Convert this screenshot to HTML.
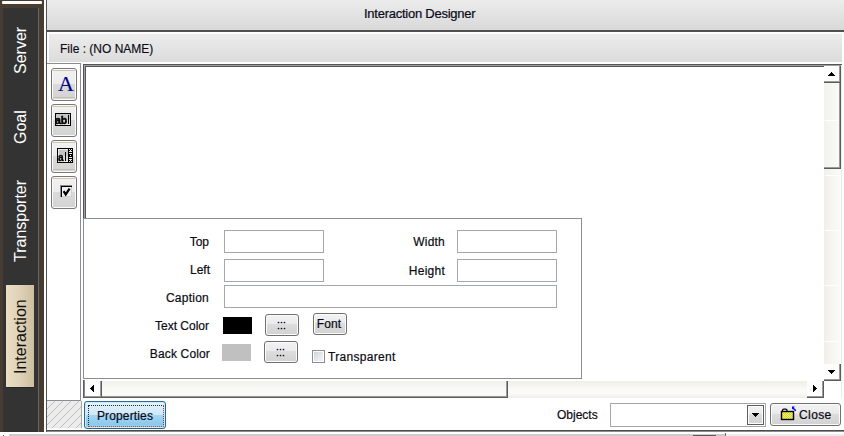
<!DOCTYPE html>
<html><head><meta charset="utf-8">
<style>
*{margin:0;padding:0;box-sizing:border-box}
html,body{width:844px;height:436px;overflow:hidden;background:#fff}
body{position:relative;font-family:"Liberation Sans",sans-serif;font-size:12px;color:#111}
.a{position:absolute}
.lbl{font-size:12px;line-height:14px;white-space:nowrap;color:#0a0a14;-webkit-text-stroke:0.2px #0a0a14}
.inp{border:1px solid #a4a6b2;background:#fff}
.btn{border:1px solid #707070;border-radius:3px;box-shadow:inset 0 0 0 1px #fbfbfb;background:linear-gradient(#f2f2f2,#ebebeb 45%,#dddddd 46%,#d2d2d2)}
.tb{width:26px;height:33px;border:1px solid #777;border-radius:3px;box-shadow:inset 0 0 0 1px #fafafa;background:linear-gradient(#f2f2f2,#ececec 48%,#dadada 50%,#d3d3d3)}
.tb i{position:absolute;left:1px;right:1px;top:1px;height:1px;background:#cfc6ae}
.tb b{position:absolute;left:1px;right:1px;bottom:2px;height:1px;background:#c6bea8}
.rot{position:absolute;white-space:nowrap;transform-origin:0 0;transform:rotate(-90deg);font-size:16px;line-height:16px}
</style></head><body>
<!-- bottom strip -->
<div class="a" style="left:9px;top:434px;width:716px;height:2px;background:#cbcbcb"></div>
<div class="a" style="left:726px;top:434px;width:118px;height:2px;background:#ececec"></div>
<div class="a" style="left:725px;top:433px;width:1px;height:3px;background:#707070"></div>
<div class="a" style="left:693px;top:435px;width:23px;height:1px;background:#5a5a5a"></div>
<div class="a" style="left:3px;top:435px;width:1px;height:1px;background:#555"></div>

<!-- left sidebar -->
<div class="a" style="left:0;top:0;width:44px;height:432px;background:#483c30"></div>
<div class="a" style="left:2px;top:1px;width:40px;height:3px;background:#fafafa;border-radius:1px"></div>
<div class="a" style="left:3px;top:8px;width:35px;height:424px;background:#333"></div>
<div class="a" style="left:38px;top:8px;width:1px;height:424px;background:#666"></div>
<div class="a" style="left:6px;top:285px;width:28px;height:102px;box-shadow:0 1px 0 #262626;background:linear-gradient(90deg,#eadec4,#ddd0b4 55%,#cdbd9f)"></div>
<div class="rot" style="left:13px;top:74px;color:#fff">Server</div>
<div class="rot" style="left:13px;top:144px;color:#fff">Goal</div>
<div class="rot" style="left:13px;top:262px;color:#fff">Transporter</div>
<div class="rot" style="left:13px;top:374px;color:#111">Interaction</div>
<div class="a" style="left:44px;top:0;width:2px;height:432px;background:#fff"></div>
<div class="a" style="left:46px;top:0;width:1px;height:432px;background:#555"></div>

<!-- title -->
<div class="a" style="left:47px;top:0;width:797px;height:30px;background:linear-gradient(#ececec,#d9d9d9)"></div>
<div class="a" style="left:47px;top:30px;width:797px;height:2px;background:#505050"></div>
<div class="a" style="left:364px;top:7px;line-height:14px;font-size:13px;letter-spacing:-0.25px;white-space:nowrap;color:#0a0a20;-webkit-text-stroke:0.2px #0a0a20">Interaction Designer</div>

<!-- file bar -->
<div class="a" style="left:49px;top:34px;width:793px;height:28px;background:linear-gradient(#ececec,#dcdcdc)"></div>
<div class="a" style="left:60px;top:42px;font-size:12px;line-height:14px;white-space:nowrap;color:#0a0a14;-webkit-text-stroke:0.15px #0a0a14">File : (NO NAME)</div>

<!-- toolbar panel -->
<div class="a" style="left:47px;top:63px;width:34px;height:338px;border:1px solid #8a8c98;border-left:none"></div>
<div class="a" style="left:47px;top:401px;width:33px;height:28px;background:#eee"></div>

<!-- canvas -->
<div class="a" style="left:83px;top:64px;width:759px;height:334px;background:#555"></div>
<div class="a" style="left:84px;top:65px;width:758px;height:333px;background:#a0a0a0"></div>
<div class="a" style="left:85px;top:66px;width:757px;height:332px;background:#555"></div>
<div class="a" style="left:86px;top:67px;width:738px;height:313px;background:#fff"></div>
<div class="a" style="left:841px;top:65px;width:1px;height:333px;background:#e6e6e6"></div>

<!-- vertical scrollbar -->
<div class="a" style="left:824px;top:66px;width:17px;height:315px;background:linear-gradient(90deg,#f0efe9,#f7f6f2 50%,#fbfbf9)"></div>
<div class="a" style="left:824px;top:66px;width:17px;height:17px;background:#fdfdfd;box-shadow:inset -1px -1px 0 #5c5c5c,inset -2px -2px 0 #9a9a9a"></div>
<div class="a" style="left:824px;top:83px;width:17px;height:86px;background:linear-gradient(90deg,#f3f2ed,#fafaf8);box-shadow:inset -1px -1px 0 #5c5c5c,inset -2px -2px 0 #9a9a9a"></div>
<div class="a" style="left:825px;top:120px;width:13px;height:1px;background:#fff"></div>
<div class="a" style="left:825px;top:175px;width:14px;height:1px;background:#fff"></div><div class="a" style="left:825px;top:230px;width:14px;height:1px;background:#fff"></div><div class="a" style="left:825px;top:285px;width:14px;height:1px;background:#fff"></div><div class="a" style="left:825px;top:341px;width:14px;height:1px;background:#fff"></div>
<div class="a" style="left:824px;top:364px;width:17px;height:17px;background:#fdfdfd;box-shadow:inset -1px -1px 0 #5c5c5c,inset -2px -2px 0 #9a9a9a"></div>
<div class="a" style="left:841px;top:65px;width:1px;height:333px;background:#ececec"></div>

<!-- horizontal scrollbar -->
<div class="a" style="left:83px;top:379px;width:741px;height:2px;background:#fff"></div>
<div class="a" style="left:85px;top:381px;width:722px;height:17px;background:linear-gradient(#efeee8,#f8f8f4 40%,#fbfbf9 70%,#efeee8)"></div>
<div class="a" style="left:83px;top:380px;width:1px;height:18px;background:#5c5c5c"></div>
<div class="a" style="left:84px;top:380px;width:1px;height:18px;background:#8a8a8a"></div>
<div class="a" style="left:85px;top:381px;width:17px;height:17px;background:#fdfdfd;box-shadow:inset -1px -1px 0 #5c5c5c,inset -2px -2px 0 #9a9a9a"></div>
<div class="a" style="left:102px;top:381px;width:406px;height:17px;background:linear-gradient(#f1f0eb,#f9f9f6 45%,#fbfbf9 75%,#f0efea);box-shadow:inset -1px -1px 0 #5c5c5c,inset -2px -2px 0 #9a9a9a"></div>
<div class="a" style="left:83px;top:397px;width:19px;height:1px;background:#5c5c5c"></div>
<div class="a" style="left:807px;top:381px;width:17px;height:17px;background:#fdfdfd;box-shadow:inset -1px -1px 0 #5c5c5c,inset -2px -2px 0 #9a9a9a"></div>
<div class="a" style="left:824px;top:381px;width:17px;height:17px;background:#fff"></div>

<!-- properties panel -->
<div class="a" style="left:83px;top:218px;width:499px;height:161px;background:#fff;border:1px solid #8a8c98"></div>
<div class="a lbl" style="left:150px;top:235px;width:59px;text-align:right">Top</div>
<div class="a lbl" style="left:150px;top:263px;width:60px;text-align:right">Left</div>
<div class="a lbl" style="left:140px;top:291px;width:69px;text-align:right;letter-spacing:0.25px">Caption</div>
<div class="a lbl" style="left:120px;top:319px;width:89px;text-align:right">Text Color</div>
<div class="a lbl" style="left:120px;top:347px;width:90px;text-align:right;letter-spacing:0.15px">Back Color</div>
<div class="a lbl" style="left:380px;top:235px;width:65px;text-align:right;letter-spacing:0.2px">Width</div>
<div class="a lbl" style="left:380px;top:264px;width:65px;text-align:right;letter-spacing:0.25px">Height</div>
<div class="a inp" style="left:224px;top:230px;width:100px;height:23px"></div>
<div class="a inp" style="left:224px;top:259px;width:100px;height:23px"></div>
<div class="a inp" style="left:224px;top:285px;width:333px;height:23px"></div>
<div class="a inp" style="left:457px;top:230px;width:100px;height:23px"></div>
<div class="a inp" style="left:457px;top:259px;width:100px;height:23px"></div>
<div class="a" style="left:223px;top:317px;width:29px;height:17px;background:#000"></div>
<div class="a" style="left:222px;top:344px;width:29px;height:17px;background:#c0c0c0"></div>
<div class="a btn" style="left:265px;top:314px;width:34px;height:22px"></div>
<div class="a btn" style="left:264px;top:341px;width:34px;height:22px"></div>
<div class="a btn" style="left:313px;top:313px;width:34px;height:22px"></div>
<div class="a lbl" style="left:312px;top:317px;width:34px;text-align:center;letter-spacing:0.15px">Font</div>
<div class="a" style="left:312px;top:350px;width:13px;height:13px;border:1px solid #8e8e8e;box-shadow:inset 0 0 0 1px #fff;background:linear-gradient(135deg,#c9ccd5,#e8e9ec 55%,#f8f8f8)"></div>
<div class="a lbl" style="left:328px;top:350px;letter-spacing:0.3px">Transparent</div>

<!-- toolbar buttons -->
<div class="a tb" style="left:51px;top:68px"><i></i><b></b></div>
<div class="a" style="left:51px;top:68px;width:26px;height:33px;text-align:center;font-family:'Liberation Serif',serif;font-size:22px;line-height:31px;padding-left:4px;-webkit-text-stroke:0.15px #000080;color:#000080">A</div>
<div class="a tb" style="left:51px;top:104px"><i></i></div>
<div class="a tb" style="left:51px;top:140px"><i></i><b></b></div>
<div class="a tb" style="left:51px;top:176px"><i></i></div>
<svg class="a" style="left:51px;top:104px" width="26" height="108" viewBox="0 0 26 108" shape-rendering="crispEdges">
 <rect x="4" y="9" width="16" height="13" fill="#000"/>
 <rect x="5" y="10" width="14" height="11" fill="#ececec"/>
 <rect x="5" y="10" width="14" height="6" fill="#c6c6c6"/>
 <rect x="5" y="16" width="14" height="4" fill="#dadada"/>
 <rect x="17" y="11" width="1" height="9" fill="#000"/>
 <rect x="6" y="44" width="16" height="15" fill="#000"/>
 <rect x="7" y="45" width="10" height="13" fill="#ececec"/>
 <rect x="8" y="46" width="9" height="6" fill="#c4c4c4"/>
 <rect x="8" y="52" width="9" height="5" fill="#dadada"/>
 <rect x="18" y="45" width="3" height="13" fill="#ececec"/>
 <rect x="14" y="48" width="1" height="9" fill="#000"/>
 <rect x="19" y="45" width="1" height="1" fill="#000"/>
 <rect x="18" y="46" width="1" height="1" fill="#000"/><rect x="20" y="46" width="1" height="1" fill="#000"/>
 <rect x="18" y="48" width="3" height="1" fill="#000"/>
 <rect x="18" y="50" width="3" height="3" fill="#000"/>
 <rect x="19" y="51" width="1" height="1" fill="#fff"/>
 <rect x="18" y="54" width="3" height="1" fill="#000"/>
 <rect x="18" y="56" width="1" height="1" fill="#000"/><rect x="20" y="56" width="1" height="1" fill="#000"/>
 <rect x="19" y="57" width="1" height="1" fill="#000"/>
 <rect x="9" y="81" width="12" height="12" fill="#d0d0d0"/>
 <rect x="9" y="81" width="12" height="1" fill="#8a8a8a"/>
 <rect x="9" y="81" width="1" height="12" fill="#8a8a8a"/>
 <rect x="10" y="82" width="11" height="1" fill="#000"/>
 <rect x="10" y="82" width="1" height="11" fill="#000"/>
 <rect x="11" y="83" width="9" height="9" fill="#f0f0f0"/>
 <path d="M12.6 87.2 L14.7 90.4 L18.6 84.6" stroke="#000" stroke-width="2.2" fill="none" stroke-linejoin="miter" shape-rendering="geometricPrecision"/>
</svg>
<div class="a" style="left:55px;top:115px;font-weight:bold;font-size:10.5px;line-height:11px;letter-spacing:-0.1px;color:#000;-webkit-text-stroke:0.5px #000;will-change:transform">ab</div>
<div class="a" style="left:58px;top:153px;font-weight:bold;font-size:10px;line-height:10px;color:#000;-webkit-text-stroke:0.4px #000;will-change:transform">a</div>

<!-- hatched -->
<svg class="a" style="left:47px;top:401px" width="35" height="28">
 <rect width="35" height="28" fill="#ececec"/>
 <g stroke="#b4b4b4" stroke-width="0.8"><line x1="-28" y1="28" x2="0" y2="0"/><line x1="-20" y1="28" x2="8" y2="0"/><line x1="-12" y1="28" x2="16" y2="0"/><line x1="-4" y1="28" x2="24" y2="0"/><line x1="4" y1="28" x2="32" y2="0"/><line x1="12" y1="28" x2="40" y2="0"/><line x1="20" y1="28" x2="48" y2="0"/><line x1="28" y1="28" x2="56" y2="0"/><line x1="36" y1="28" x2="64" y2="0"/></g>
 <rect x="34" y="0" width="1" height="28" fill="#a8a8a8"/>
 <rect x="0" y="27" width="35" height="1" fill="#fff"/>
</svg>

<!-- bottom bar -->
<div class="a" style="left:84px;top:401px;width:82px;height:28px;border:1px solid #2a6595;border-radius:3px;box-shadow:inset 0 0 0 1px #d0ecfa;background:linear-gradient(#e2f2fb,#d0e9f8 48%,#a4d6f2 50%,#8ccaee 85%,#9ed3f1)"></div>
<div class="a" style="left:88px;top:405px;width:76px;height:22px;border:1px dotted #2a2a2a;border-bottom-color:#b8542a;border-right-color:#7a4a3a"></div>
<div class="a lbl" style="left:84px;top:409px;width:82px;text-align:center;letter-spacing:0.15px">Properties</div>
<div class="a lbl" style="left:557px;top:408px">Objects</div>
<div class="a" style="left:610px;top:403px;width:156px;height:24px;border:1px solid #a4a6b0;background:#fff"></div>
<div class="a" style="left:747px;top:405px;width:17px;height:20px;border:1px solid #5e5e5e;box-shadow:inset 0 0 0 1px #fdfdfd;background:linear-gradient(#f2f2f2,#ececec 45%,#dcdcdc 47%,#d2d2d2)"></div>
<div class="a btn" style="left:770px;top:403px;width:71px;height:23px"></div>
<div class="a lbl" style="left:799px;top:408px;letter-spacing:0.4px">Close</div>
<div class="a" style="left:47px;top:430px;width:797px;height:1px;background:#4c4c4c"></div><div class="a" style="left:47px;top:431px;width:797px;height:1px;background:#8c8c8c"></div>
<svg class="a" style="left:0;top:0;z-index:5" width="844" height="436" shape-rendering="crispEdges" fill="#000"><rect x="831" y="72" width="1" height="1"/><rect x="830" y="73" width="3" height="1"/><rect x="829" y="74" width="5" height="1"/><rect x="828" y="75" width="7" height="1"/><rect x="828" y="370" width="7" height="1"/><rect x="829" y="371" width="5" height="1"/><rect x="830" y="372" width="3" height="1"/><rect x="831" y="373" width="1" height="1"/><rect x="90" y="388" width="1" height="1"/><rect x="91" y="387" width="1" height="3"/><rect x="92" y="386" width="1" height="5"/><rect x="93" y="385" width="1" height="7"/><rect x="813" y="385" width="1" height="7"/><rect x="814" y="386" width="1" height="5"/><rect x="815" y="387" width="1" height="3"/><rect x="816" y="388" width="1" height="1"/><rect x="752" y="413" width="7" height="1"/><rect x="753" y="414" width="5" height="1"/><rect x="754" y="415" width="3" height="1"/><rect x="755" y="416" width="1" height="1"/></svg>

<svg class="a" style="left:778px;top:404px" width="22" height="18" viewBox="0 0 22 18">
 <defs><pattern id="chk" width="2" height="2" patternUnits="userSpaceOnUse"><rect width="2" height="2" fill="#ffff00"/><rect width="1" height="1" fill="#c8c8a0"/><rect x="1" y="1" width="1" height="1" fill="#c8c8a0"/></pattern></defs>
  <path d="M4.5 7.5 V6.5 Q4.5 5.2 5.8 5.2 H7.7 Q9 5.2 9 6.5 V7.5" fill="#fff" stroke="#000" stroke-width="1.3"/>
 <rect x="3.5" y="7.5" width="12" height="8" fill="url(#chk)" stroke="#000" stroke-width="1.4"/>
 <path d="M14.8 3.8 L17.8 6.8" stroke="#0000ff" stroke-width="1.5"/>
 <path d="M14 2.5 H17 L14 5.5 Z" fill="#0000ff"/>
</svg>
<svg class="a" style="left:0;top:0;z-index:6" width="844" height="436" fill="#10102a"><circle cx="278.5" cy="322.5" r="0.85"/><circle cx="281.5" cy="322.5" r="0.85"/><circle cx="284.5" cy="322.5" r="0.85"/><circle cx="278.5" cy="328.5" r="0.85"/><circle cx="281.5" cy="328.5" r="0.85"/><circle cx="284.5" cy="328.5" r="0.85"/><circle cx="277.5" cy="349.5" r="0.85"/><circle cx="280.5" cy="349.5" r="0.85"/><circle cx="283.5" cy="349.5" r="0.85"/><circle cx="277.5" cy="355.5" r="0.85"/><circle cx="280.5" cy="355.5" r="0.85"/><circle cx="283.5" cy="355.5" r="0.85"/></svg>
</body></html>
